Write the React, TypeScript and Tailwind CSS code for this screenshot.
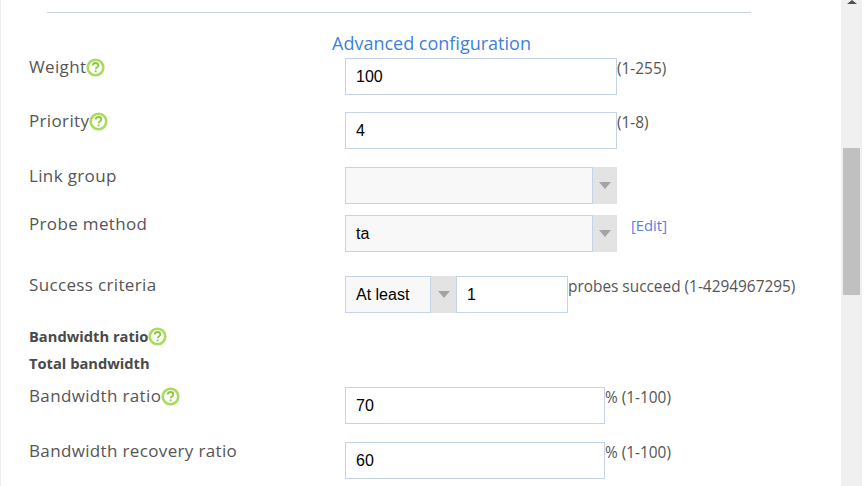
import type { ReactNode } from 'react';

function Help() {
  return (
    <svg width="19" height="19" viewBox="0 0 19 19" className="shrink-0">
      <circle cx="9.5" cy="9.5" r="7.8" fill="#fff" stroke="#a9dc5c" strokeWidth="2.6" />
      <path d="M6.7 7.6c0-1.6 1.2-2.6 2.8-2.6s2.8 1 2.8 2.4c0 1-.6 1.5-1.4 2-.8.5-1.3.9-1.3 1.8" fill="none" stroke="#8dc63f" strokeWidth="1.8" />
      <rect x="8.7" y="12.4" width="1.8" height="1.9" fill="#8dc63f" />
    </svg>
  );
}

function Arrow({ w = 'w-6' }: { w?: string }) {
  return (
    <div className={`${w} h-full bg-[#e3e3e3] flex items-center justify-center shrink-0`}>
      <svg width="12" height="7" viewBox="0 0 12 7">
        <path d="M0 0h12L6 7z" fill="#a3a3a3" />
      </svg>
    </div>
  );
}

function Input({ value, w }: { value: string; w: string }) {
  return (
    <div className={`${w} h-[37px] border border-[#c5d3e6] bg-white pl-[10px] flex items-center text-[16px] text-black font-['Liberation_Sans',sans-serif]`}>
      {value}
    </div>
  );
}

function Select({ value }: { value?: string }) {
  return (
    <div className="flex h-[37px] w-[272px] font-['Liberation_Sans',sans-serif] text-[16px] text-black">
      <div className="flex-1 border border-[#c5d3e6] bg-[#f8f8f8] pl-[10px] flex items-center">{value}</div>
      <Arrow />
    </div>
  );
}

function Row({ label, help, mb, children }: { label: string; help?: boolean; mb: string; children: ReactNode }) {
  return (
    <div className={`flex items-start ${mb}`}>
      <div className="w-[316px] flex items-center h-[20px] mt-[-1px] text-[17px] leading-[20px] tracking-[0.35px] text-[#555]">
        {label}
        {help && <Help />}
      </div>
      {children}
    </div>
  );
}

function Hint({ children }: { children: ReactNode }) {
  return <span className="text-[15.4px] leading-[20px] text-[#555] mt-[1px]">{children}</span>;
}

export default function App() {
  return (
    <div className="w-[867px] h-[486px] overflow-hidden bg-white flex font-['Open_Sans','Noto_Sans',sans-serif]">
      <div className="w-[841px] h-full border-l border-[#eeeeee] pl-[46px] overflow-hidden">
        <div className="w-[704px] border-t border-[#c5d3e6] mt-[12px]" />
        <div className="pl-[285px] mt-[18px] h-[27px] text-[18px] leading-[24px] text-[#3f7fdd]">Advanced configuration</div>
        <div className="ml-[-18px]">
          <Row label="Weight" help mb="mb-[17px]">
            <Input value="100" w="w-[272px]" />
            <Hint>(1-255)</Hint>
          </Row>
          <Row label="Priority" help mb="mb-[18px]">
            <Input value="4" w="w-[272px]" />
            <Hint>(1-8)</Hint>
          </Row>
          <Row label="Link group" mb="mb-[11px]">
            <Select />
          </Row>
          <Row label="Probe method" mb="mb-[24px]">
            <Select value="ta" />
            <a className="ml-[14px] text-[14.8px] leading-[20px] text-[#5a7fe0]">[Edit]</a>
          </Row>
          <Row label="Success criteria" mb="mb-[10px]">
            <div className="flex h-[37px] w-[223px] font-['Liberation_Sans',sans-serif] text-[16px] text-black">
              <div className="w-[86px] border border-[#c5d3e6] bg-[#f8f8f8] pl-[10px] flex items-center">At least</div>
              <Arrow w="w-[25px]" />
              <Input value="1" w="w-[112px]" />
            </div>
            <Hint>probes succeed (1-4294967295)</Hint>
          </Row>
          <div className="h-[27px] flex items-center text-[14.7px] font-bold text-[#4a4a4a]">
            Bandwidth ratio
            <Help />
          </div>
          <div className="h-[27px] flex items-center text-[14.7px] font-bold text-[#4a4a4a]">Total bandwidth</div>
          <div className="h-[10px]" />
          <Row label="Bandwidth ratio" help mb="mb-[18px]">
            <Input value="70" w="w-[260px]" />
            <Hint>% (1-100)</Hint>
          </Row>
          <Row label="Bandwidth recovery ratio" mb="mb-0">
            <Input value="60" w="w-[260px]" />
            <Hint>% (1-100)</Hint>
          </Row>
        </div>
      </div>
      <div className="w-[21px] h-full bg-[#f0f0f0] relative shrink-0">
        <svg width="10" height="4" viewBox="0 0 10 4" className="absolute left-[6px] top-0">
          <path d="M0 4h10L5 0z" fill="#505050" />
        </svg>
        <div className="absolute left-[2px] top-[148px] w-[17px] h-[147px] bg-[#c0c0c0]" />
      </div>
    </div>
  );
}
